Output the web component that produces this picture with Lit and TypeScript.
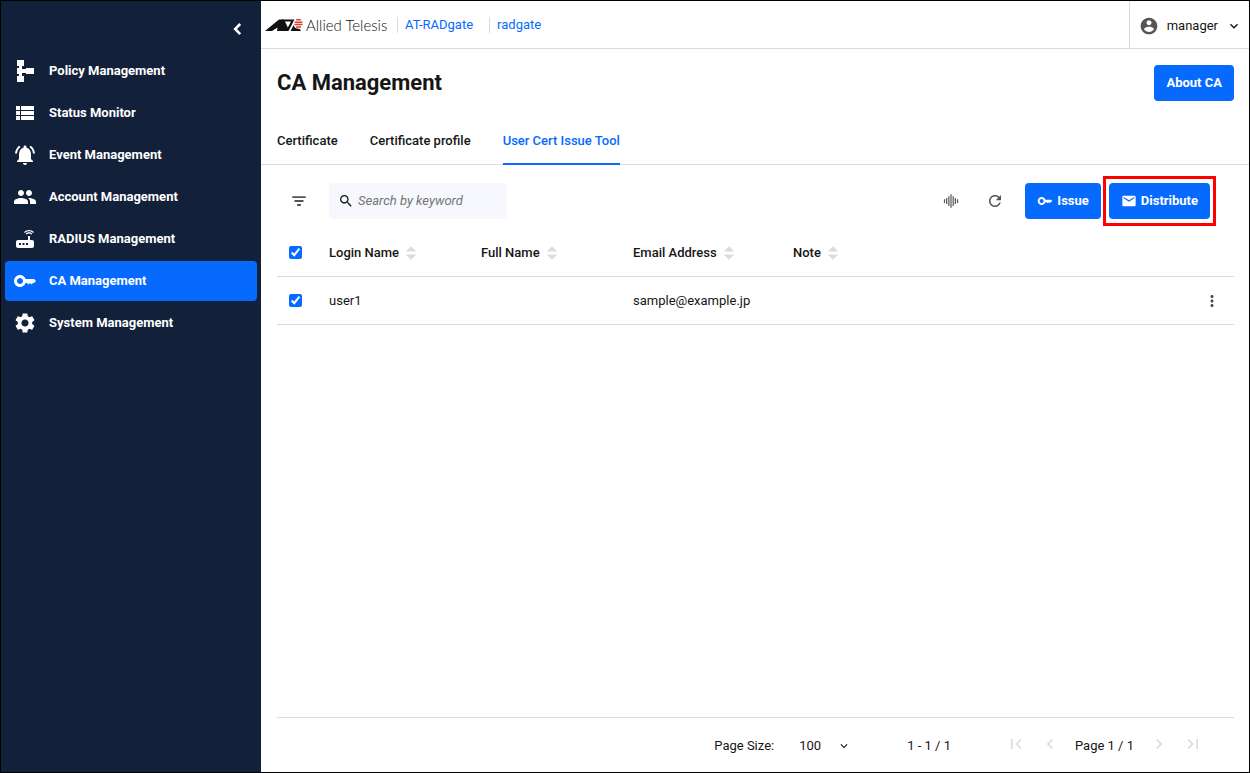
import { LitElement, html, css, svg, nothing } from "lit";
import { customElement, property, state } from "lit/decorators.js";

const ICONS: Record<string, string> = {
  policy: "M4 1h7v6H9v3h4V9h8v6h-8v-1H9v3h2v6H4v-6h2v-2H4V9h2V7H4z",
  list: "M3 9h4V5H3v4zm0 5h4v-4H3v4zm5 0h13v-4H8v4zm0-5h13V5H8v4zM3 19h4v-4H3v4zm5 0h13v-4H8v4z",
  bell: "M7.58 4.08L6.15 2.65C3.75 4.48 2.17 7.3 2.03 10.5h2c.15-2.65 1.51-4.97 3.55-6.42zm12.39 6.42h2c-.15-3.2-1.73-6.02-4.12-7.85l-1.42 1.43c2.02 1.45 3.39 3.77 3.54 6.42zM18 11c0-3.07-1.64-5.64-4.5-6.32V4c0-.83-.67-1.5-1.5-1.5s-1.5.67-1.5 1.5v.68C7.63 5.36 6 7.92 6 11v5l-2 2v1h16v-1l-2-2v-5zm-6 11c.14 0 .27-.01.4-.04.65-.14 1.18-.58 1.44-1.18.1-.24.15-.5.15-.78h-4c.01 1.1.9 2 2.01 2z",
  people: "M16 11c1.66 0 2.99-1.34 2.99-3S17.66 5 16 5s-3 1.34-3 3 1.34 3 3 3zm-8 0c1.66 0 2.99-1.34 2.99-3S9.66 5 8 5 5 6.34 5 8s1.34 3 3 3zm0 2c-2.33 0-7 1.17-7 3.5V19h14v-2.500c0-2.330-4.670-3.500-7-3.500zm8 0c-.29 0-.62.020-.97.050 1.160.84 1.970 1.970 1.970 3.450V19h6v-2.500c0-2.330-4.670-3.500-7-3.500z",
  router: "M20.200 5.900l.8-.8C19.600 3.700 17.800 3 16 3s-3.600.7-5 2.100l.8.8C13 4.800 14.500 4.200 16 4.200s3 .6 4.200 1.700zm-.9.8c-.9-.9-2.100-1.400-3.300-1.400s-2.400.5-3.300 1.400l.8.8c.7-.7 1.600-1 2.500-1s1.800.3 2.500 1l.8-.8zM19 13h-2V9h-2v4H5c-1.100 0-2 .9-2 2v4c0 1.100.9 2 2 2h14c1.100 0 2-.9 2-2v-4c0-1.100-.9-2-2-2zM8 18H6v-2h2v2zm3.500 0h-2v-2h2v2zm3.500 0h-2v-2h2v2z",
  key: "M12.650 10C11.830 7.670 9.610 6 7 6c-3.310 0-6 2.690-6 6s2.690 6 6 6c2.610 0 4.830-1.670 5.650-4H14l1.500 1.500L17 14l1.500 1.500L20 14h1l2-2-2-2zM7 15c-1.650 0-3-1.350-3-3s1.350-3 3-3 3 1.350 3 3-1.350 3-3 3z",
  gear: "M19.140 12.940c.04-.3.060-.61.060-.94 0-.32-.02-.64-.07-.94l2.030-1.580c.18-.14.230-.41.120-.61l-1.920-3.320c-.12-.22-.37-.29-.59-.22l-2.390.96c-.5-.38-1.030-.7-1.620-.94l-.36-2.540c-.04-.24-.24-.41-.48-.41h-3.840c-.24 0-.43.170-.47.410l-.36 2.540c-.59.240-1.130.57-1.620.94l-2.390-.96c-.22-.08-.47 0-.59.220L2.740 8.870c-.12.210-.08.470.12.610l2.030 1.580c-.05.3-.09.63-.09.940s.02.640.070.940l-2.030 1.580c-.18.140-.23.410-.12.610l1.920 3.320c.12.220.37.290.59.220l2.390-.96c.5.380 1.030.7 1.620.94l.36 2.540c.05.240.24.410.48.410h3.840c.24 0 .44-.17.470-.41l.36-2.540c.59-.24 1.130-.56 1.620-.94l2.390.96c.22.080.47 0 .59-.22l1.920-3.320c.12-.22.070-.47-.12-.61l-2.010-1.580zM12 15.600c-1.980 0-3.600-1.620-3.600-3.600s1.620-3.600 3.600-3.600 3.600 1.620 3.600 3.600-1.620 3.600-3.600 3.600z",
  collapse: "M16.500 7.500L14.500 5.500 8 12l6.500 6.500 2-2L12 12z",
  left: "M15.410 7.410L14 6l-6 6 6 6 1.410-1.410L10.830 12z",
  right: "M10 6L8.590 7.410 13.170 12l-4.580 4.590L10 18l6-6z",
  down: "M7.410 8.590L12 13.170l4.590-4.580L18 10l-6 6-6-6z",
  first: "M18.410 16.590L13.820 12l4.590-4.590L17 6l-6 6 6 6zM6 6h2v12H6z",
  last: "M5.590 7.410L10.180 12l-4.590 4.590L7 18l6-6-6-6zM16 6h2v12h-2z",
  account: "M12 2C6.480 2 2 6.480 2 12s4.480 10 10 10 10-4.480 10-10S17.520 2 12 2zm0 3c1.660 0 3 1.340 3 3s-1.340 3-3 3-3-1.340-3-3 1.340-3 3-3zm0 14.200c-2.500 0-4.710-1.280-6-3.220.03-1.990 4-3.080 6-3.080 1.990 0 5.970 1.090 6 3.080-1.290 1.940-3.500 3.220-6 3.220z",
  filter: "M9.500 18.500h5V16h-5v2.500zM3 5.500V8h18V5.500H3zm3 7.700h12v-2.500H6v2.500z",
  search: "M15.500 14h-.79l-.28-.27C15.410 12.590 16 11.110 16 9.500 16 5.910 13.090 3 9.500 3S3 5.910 3 9.500 5.910 16 9.500 16c1.610 0 3.090-.59 4.230-1.570l.27.280v.79l5 4.990L20.490 19l-4.990-5zm-6 0C7.010 14 5 11.990 5 9.500S7.010 5 9.500 5 14 7.010 14 9.500 11.990 14 9.500 14z",
  wave: "M2.500 9.500h1.600v5H2.500zM5.400 8H7v8H5.400zM8.300 5.500h1.600v13H8.300zM11.200 3h1.600v18h-1.600zM14.100 5.500h1.600v13h-1.600zM17 8h1.600v8H17zM19.900 9.500h1.600v5h-1.600z",
  refresh: "M17.650 6.350C16.200 4.900 14.210 4 12 4c-4.420 0-7.990 3.580-7.990 8s3.570 8 7.990 8c3.730 0 6.840-2.550 7.730-6h-2.080c-.82 2.330-3.040 4-5.650 4-3.310 0-6-2.690-6-6s2.690-6 6-6c1.660 0 3.140.69 4.220 1.780L13 11h7V4l-2.350 2.350z",
  mail: "M20 4H4c-1.100 0-1.990.9-1.990 2L2 18c0 1.100.9 2 2 2h16c1.100 0 2-.9 2-2V6c0-1.100-.9-2-2-2zm0 4l-8 5-8-5V6l8 5 8-5v2z",
  more: "M12 8c1.100 0 2-.9 2-2s-.9-2-2-2-2 .9-2 2 .9 2 2 2zm0 2c-1.100 0-2 .9-2 2s.9 2 2 2 2-.9 2-2-.9-2-2-2zm0 6c-1.100 0-2 .9-2 2s.9 2 2 2 2-.9 2-2-.9-2-2-2z",
  sort: "M12 3l7 7H5zM5 14h14l-7 7z",
};

const icon = (name: string, size = 24) => html`<svg
  width=${size}
  height=${size}
  viewBox="0 0 24 24"
  fill="currentColor"
  aria-hidden="true"
>
  ${svg`<path d=${ICONS[name]}></path>`}
</svg>`;

const shared = css`
  :host,
  * {
    box-sizing: border-box;
  }
  svg {
    display: block;
    flex: none;
  }
  a {
    color: inherit;
    text-decoration: none;
  }
  button,
  input,
  select {
    margin: 0;
    padding: 0;
    border: 0;
    background: none;
    color: inherit;
    font: inherit;
  }
  button {
    display: flex;
    align-items: center;
    justify-content: center;
    cursor: pointer;
  }
  .primary {
    height: 36px;
    padding: 0 12px;
    gap: 4px;
    border-radius: 4px;
    background: #066aff;
    color: #fff;
    font-weight: 700;
  }
`;

@customElement("side-nav")
class SideNav extends LitElement {
  @property() current = "";

  static styles = [
    shared,
    css`
      :host {
        display: flex;
        flex-direction: column;
        width: 260px;
        padding: 12px 4px;
        background: #122039;
        color: #fff;
      }
      .toggle {
        align-self: flex-end;
        width: 32px;
        height: 32px;
        margin-right: 4px;
      }
      .list {
        display: flex;
        flex-direction: column;
        gap: 2px;
        margin-top: 6px;
      }
      .item {
        display: flex;
        align-items: center;
        gap: 12px;
        height: 40px;
        padding: 0 8px;
        border-radius: 4px;
        font-weight: 700;
      }
      .active {
        background: #066aff;
      }
    `,
  ];

  items = [
    ["policy", "Policy Management"],
    ["list", "Status Monitor"],
    ["bell", "Event Management"],
    ["people", "Account Management"],
    ["router", "RADIUS Management"],
    ["key", "CA Management"],
    ["gear", "System Management"],
  ];

  render() {
    return html`
      <button class="toggle" aria-label="Collapse menu">${icon("collapse", 22)}</button>
      <nav class="list">
        ${this.items.map(
          ([name, label]) => html`<a
            class="item ${label === this.current ? "active" : ""}"
            href="#"
            aria-current=${label === this.current ? "page" : nothing}
            >${icon(name)}<span>${label}</span></a
          >`
        )}
      </nav>
    `;
  }
}

@customElement("top-bar")
class TopBar extends LitElement {
  static styles = [
    shared,
    css`
      :host {
        display: flex;
        align-items: center;
        height: 48px;
        padding-left: 4px;
        border-bottom: 1px solid #dcdcdc;
      }
      .brand {
        display: flex;
        align-items: center;
        gap: 2px;
        width: 132px;
        font: 300 15px Lato, "Open Sans", sans-serif;
        color: #111;
        white-space: nowrap;
      }
      .crumb {
        padding: 0 16px 0 7px;
        border-left: 1px solid #dcdcdc;
        line-height: 16px;
        color: #066aff;
      }
      .user {
        align-self: stretch;
        margin-left: auto;
        padding: 2px 7px 0 9px;
        gap: 8px;
        border-left: 1px solid #dcdcdc;
      }
      .avatar {
        color: #555;
      }
    `,
  ];

  render() {
    return html`
      <a class="brand" href="#">
        <svg width="39" height="14" viewBox="0 0 39 14" aria-hidden="true">
          <path d="M0 13L14 1.500H18.500L23 13H12L12.500 9.500L7 13z" fill="#111" />
          <path d="M16.500 1.500H29.500L23.500 13H21z" fill="#111" />
          <path d="M20 3.500H26L22.800 9.500z" fill="#fff" />
          <path d="M25.500 13L29.500 5.500L36 12.500L35 13z" fill="#111" />
          <circle cx="33.500" cy="5.500" r="5.200" fill="#fff" />
          <path
            d="M31.200 1.800h4.600M29.600 4.200h7.800M29.500 6.600h8M31 9h5"
            stroke="#dc3c32"
            stroke-width="1.500"
          />
        </svg>
        <span>Allied Telesis</span>
      </a>
      <a class="crumb" href="#">AT-RADgate</a>
      <a class="crumb" href="#">radgate</a>
      <button class="user">
        <span class="avatar">${icon("account", 20)}</span>
        <span>manager</span>
        ${icon("down", 16)}
      </button>
    `;
  }
}

@customElement("cert-table")
class CertTable extends LitElement {
  static styles = [
    shared,
    css`
      :host {
        display: block;
      }
      .table {
        width: 100%;
        table-layout: fixed;
        border-spacing: 0;
      }
      .check {
        width: 44px;
      }
      .name {
        width: 152px;
      }
      .email {
        width: 160px;
      }
      .actions {
        width: 44px;
      }
      .cell {
        height: 48px;
        padding: 0 8px;
        border-bottom: 1px solid #dcdcdc;
        text-align: left;
        font-weight: 400;
      }
      .heading {
        font-weight: 500;
      }
      .sort {
        gap: 3px;
      }
      .arrows {
        color: #dcdcdc;
      }
      .box {
        display: block;
        width: 13px;
        height: 13px;
        margin-left: 4px;
        accent-color: #066aff;
      }
      .more {
        width: 28px;
        height: 28px;
        color: #444;
      }
    `,
  ];

  columns = ["Login Name", "Full Name", "Email Address", "Note"];
  rows = [["user1", "", "sample@example.jp", ""]];

  render() {
    return html`
      <table class="table">
        <colgroup>
          <col class="check" />
          <col class="name" />
          <col class="name" />
          <col class="email" />
          <col />
          <col class="actions" />
        </colgroup>
        <thead>
          <tr>
            <th class="cell"><input class="box" type="checkbox" aria-label="Select all" checked /></th>
            ${this.columns.map(
              (label) => html`<th class="cell heading">
                <button class="sort">
                  <span>${label}</span><span class="arrows">${icon("sort", 18)}</span>
                </button>
              </th>`
            )}
            <th class="cell"></th>
          </tr>
        </thead>
        <tbody>
          ${this.rows.map(
            (row) => html`<tr>
              <td class="cell">
                <input class="box" type="checkbox" aria-label="Select ${row[0]}" checked />
              </td>
              ${row.map((value) => html`<td class="cell">${value}</td>`)}
              <td class="cell">
                <button class="more" aria-label="Row actions">${icon("more", 18)}</button>
              </td>
            </tr>`
          )}
        </tbody>
      </table>
    `;
  }
}

@customElement("page-footer")
class PageFooter extends LitElement {
  static styles = [
    shared,
    css`
      :host {
        display: flex;
        align-items: center;
        justify-content: flex-end;
        height: 55px;
        padding: 2px 29px 0 0;
        border-top: 1px solid #dcdcdc;
      }
      .size {
        display: flex;
        align-items: center;
        gap: 25px;
      }
      .picker {
        display: grid;
        grid-template-columns: 52px;
        align-items: center;
      }
      .select,
      .arrow {
        grid-area: 1 / 1;
      }
      .select {
        appearance: none;
        width: 100%;
      }
      .arrow {
        justify-self: end;
        pointer-events: none;
      }
      .range {
        margin: 0 53px 0 56px;
      }
      .pager {
        display: flex;
        align-items: center;
        gap: 10px;
      }
      .step {
        width: 24px;
        height: 24px;
        margin-bottom: 5px;
        color: #dcdcdc;
      }
      .page {
        margin: 0 3px;
      }
    `,
  ];

  render() {
    return html`
      <div class="size">
        <label for="size">Page Size:</label>
        <span class="picker">
          <select class="select" id="size">
            <option>100</option>
          </select>
          <span class="arrow">${icon("down", 14)}</span>
        </span>
      </div>
      <span class="range">1 - 1 / 1</span>
      <div class="pager">
        <button class="step" aria-label="First page" disabled>${icon("first", 20)}</button>
        <button class="step" aria-label="Previous page" disabled>${icon("left", 20)}</button>
        <span class="page">Page 1 / 1</span>
        <button class="step" aria-label="Next page" disabled>${icon("right", 20)}</button>
        <button class="step" aria-label="Last page" disabled>${icon("last", 20)}</button>
      </div>
    `;
  }
}

@customElement("app-root")
class AppRoot extends LitElement {
  @state() private tab = "User Cert Issue Tool";

  static styles = [
    shared,
    css`
      :host {
        display: grid;
        grid-template-columns: auto 1fr;
        min-height: 100vh;
        border: 1px solid #000;
        background: #fff;
        color: #161616;
        font: 13px/20px Roboto, sans-serif;
      }
      .main {
        display: flex;
        flex-direction: column;
        min-width: 0;
      }
      .head {
        display: flex;
        align-items: center;
        justify-content: space-between;
        padding: 16px 15px 16px 16px;
      }
      .title {
        margin: 0;
        font-size: 22px;
        line-height: 28px;
        font-weight: 700;
      }
      .tabs {
        display: flex;
        gap: 32px;
        padding: 0 16px;
        border-bottom: 1px solid #dcdcdc;
      }
      .tab {
        height: 48px;
        margin-bottom: -1px;
        padding-top: 2px;
        border-bottom: 2px solid transparent;
        font-weight: 500;
      }
      .selected {
        border-color: #066aff;
        color: #066aff;
      }
      .body {
        flex: 1;
        display: flex;
        flex-direction: column;
        padding: 18px 15px 0 16px;
      }
      .tools {
        display: flex;
        align-items: center;
        padding-right: 24px;
        margin-bottom: 10px;
      }
      .tool {
        width: 44px;
        height: 36px;
        color: #555;
      }
      .search {
        display: flex;
        align-items: center;
        gap: 4px;
        width: 178px;
        height: 36px;
        margin: 0 auto 0 8px;
        padding: 0 8px 0 9px;
        border-radius: 4px;
        background: #f6f8fd;
      }
      .field {
        flex: 1;
        min-width: 0;
        outline: 0;
      }
      .field::placeholder {
        color: #757575;
        font-style: italic;
      }
      .actions {
        display: flex;
        gap: 8px;
        margin-left: 8px;
      }
      .marked {
        position: relative;
      }
      .marked::after {
        content: "";
        position: absolute;
        inset: -7px -6px;
        border: 3px solid #f00;
        pointer-events: none;
      }
      .foot {
        margin-top: auto;
      }
    `,
  ];

  render() {
    return html`
      <side-nav current="CA Management"></side-nav>
      <div class="main">
        <top-bar></top-bar>
        <header class="head">
          <h1 class="title">CA Management</h1>
          <button class="primary">About CA</button>
        </header>
        <div class="tabs" role="tablist">
          ${["Certificate", "Certificate profile", "User Cert Issue Tool"].map(
            (label) => html`<button
              class="tab ${label === this.tab ? "selected" : ""}"
              role="tab"
              aria-selected=${label === this.tab ? "true" : "false"}
              @click=${() => (this.tab = label)}
            >
              ${label}
            </button>`
          )}
        </div>
        <section class="body">
          <div class="tools">
            <button class="tool" aria-label="Filter">${icon("filter", 18)}</button>
            <label class="search">
              ${icon("search", 16)}
              <input class="field" type="text" placeholder="Search by keyword" aria-label="Search by keyword" />
            </label>
            <button class="tool" aria-label="Column width">${icon("wave", 18)}</button>
            <button class="tool" aria-label="Refresh">${icon("refresh", 18)}</button>
            <div class="actions">
              <button class="primary">${icon("key", 16)}Issue</button>
              <span class="marked"><button class="primary">${icon("mail", 16)}Distribute</button></span>
            </div>
          </div>
          <cert-table></cert-table>
          <page-footer class="foot"></page-footer>
        </section>
      </div>
    `;
  }
}
